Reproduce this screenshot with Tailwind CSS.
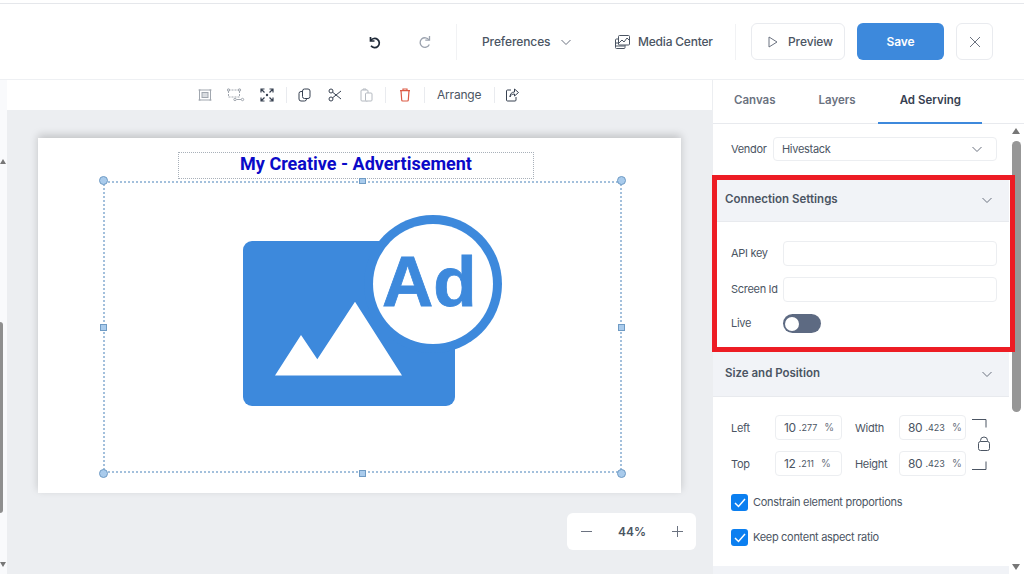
<!DOCTYPE html>
<html lang="en">
<head>
<meta charset="UTF-8">
<title>Ad Serving Editor</title>
<script src="https://cdn.jsdelivr.net/npm/@tailwindcss/browser@4"></script>
</head>
<body class="bg-white">
<div class="w-[1024px] h-[574px] overflow-hidden relative flex flex-col font-['Inter','Liberation_Sans',sans-serif] text-[#4b5563]">

  <!-- Header -->
  <header class="h-[77px] shrink-0 border-t border-t-[#e5e7eb] mt-[3px] border-b border-b-[#eef0f3] flex items-center text-[12px] font-medium tracking-[-0.1px]">
    <svg class="ml-[366px]" width="16" height="16" viewBox="0 0 16 16" fill="none" stroke="#1f2937" stroke-width="1.7"><path d="M4.500 3v4h4"/><path d="M4.800 6.600A4.600 4.600 0 1 1 5 11.800"/></svg>
    <svg class="ml-[35px]" width="16" height="16" viewBox="0 0 16 16" fill="none" stroke="#9ca3af" stroke-width="1.300"><path d="M12.500 2v4.200H8.300"/><path d="M12 6A4.800 4.800 0 1 0 12.300 10.500"/></svg>
    <div class="ml-[23px] w-px h-[36px] bg-[#f1f2f4]"></div>
    <span class="ml-[25px] w-[68px]">Preferences</span>
    <svg class="ml-[10px]" width="12" height="12" viewBox="0 0 12 12" fill="none" stroke="#6b7280"><path d="M1.500 4l4.500 4.500L10.500 4"/></svg>
    <svg class="ml-[42px]" width="17" height="16" viewBox="0 0 17 16" fill="none" stroke="#4b5563"><rect x="4.500" y="1.500" width="11" height="9.500" rx="1"/><path d="M5 9l3-3 2 2 3-4 2 2"/><path d="M4.500 5H2.500a1 1 0 0 0-1 1v7.500a1 1 0 0 0 1 1H10a1 1 0 0 0 1-1V11"/><path d="M1.500 9h3M1.500 12h9"/></svg>
    <span class="ml-[7px] w-[75px] whitespace-nowrap tracking-[-0.2px]">Media Center</span>
    <div class="ml-[22px] w-px h-[36px] bg-[#f1f2f4]"></div>
    <button class="ml-[15px] w-[94px] h-[37px] rounded-md border border-[#e9ebef] bg-white flex items-center pl-[15px] font-medium">
      <svg width="12" height="14" viewBox="0 0 12 14" fill="none" stroke="#6b7280"><path d="M2 2v10l8-5z"/></svg>
      <span class="ml-[9px]">Preview</span>
    </button>
    <button class="ml-[12px] w-[87px] h-[37px] rounded-md bg-[#3d89dc] text-white font-semibold">Save</button>
    <button class="ml-[12px] w-[37px] h-[37px] rounded-md border border-[#e9ebef] bg-white flex items-center justify-center">
      <svg width="12" height="12" viewBox="0 0 12 12" fill="none" stroke="#6b7280"><path d="M1 1l10 10M11 1L1 11"/></svg>
    </button>
  </header>

  <div class="flex flex-1 min-h-0">
    <!-- Left scrollbar strip -->
    <div class="w-[7px] shrink-0 bg-[#f9fafc] relative">
      <div class="absolute left-0 top-[79px] border-l-[3px] border-r-[3px] border-b-[5px] border-l-transparent border-r-transparent border-b-[#777]"></div>
      <div class="absolute left-0 top-[242px] w-[3px] h-[191px] rounded-r-sm bg-[#8f8f8f]"></div>
      <div class="absolute left-0 top-[482px] border-l-[3px] border-r-[3px] border-t-[5px] border-l-transparent border-r-transparent border-t-[#777]"></div>
    </div>

    <!-- Editor -->
    <main class="w-[705px] shrink-0 flex flex-col bg-[#eceef1]">
      <div class="h-[30px] shrink-0 bg-white flex items-center text-[12px] tracking-[-0.1px]">
        <svg class="ml-[191px]" width="14" height="14" viewBox="0 0 14 14" fill="none" stroke="#a1a7af"><rect x="1.500" y="2" width="11" height="10"/><rect x="4" y="4.500" width="6" height="5" fill="#d9dce0"/><path d="M0.500 2h2M11.500 2h2M0.500 12h2M11.500 12h2"/></svg>
        <svg class="ml-[15px]" width="18" height="14" viewBox="0 0 18 14" fill="none" stroke="#a1a7af"><rect x="1.500" y="2" width="11" height="7" stroke-dasharray="2 1"/><circle cx="1.500" cy="2" r="1.200"/><circle cx="12.500" cy="2" r="1.200"/><circle cx="8" cy="11.500" r="1.200"/><circle cx="15.500" cy="11.500" r="1.200"/><path d="M9.500 11.500h4.500"/></svg>
        <svg class="ml-[15px]" width="14" height="14" viewBox="0 0 14 14" fill="none" stroke="#374151" stroke-width="1.200"><path d="M1 4.500V1h3.500M9.500 1H13v3.500M13 9.500V13H9.500M4.500 13H1V9.500M1.500 1.500l3 3M12.500 1.500l-3 3M12.500 12.500l-3-3M1.500 12.500l3-3"/><circle cx="7" cy="7" r="1.200" fill="#374151" stroke="none"/></svg>
        <div class="ml-[12px] w-px h-[16px] bg-[#e9ebef]"></div>
        <svg class="ml-[11px]" width="13" height="14" viewBox="0 0 13 14" fill="none" stroke="#374151"><rect x="4.500" y="1" width="7.500" height="9.500" rx="2"/><path d="M4.500 3.500H3a2 2 0 0 0-2 2V11a2 2 0 0 0 2 2h3.500a2 2 0 0 0 2-2v-.5"/></svg>
        <svg class="ml-[17px]" width="14" height="14" viewBox="0 0 14 14" fill="none" stroke="#374151"><circle cx="3" cy="3" r="2"/><circle cx="3" cy="11" r="2"/><path d="M4.600 4.200L13 11M4.600 9.800L13 3"/></svg>
        <svg class="ml-[18px]" width="13" height="14" viewBox="0 0 13 14" fill="none" stroke="#b5bac1"><rect x="1" y="2" width="7" height="11" rx="1"/><rect x="5.500" y="5" width="6.500" height="8" rx="1" fill="#fff"/><path d="M3 2V1h3v1"/></svg>
        <div class="ml-[12px] w-px h-[16px] bg-[#e9ebef]"></div>
        <svg class="ml-[13px]" width="12" height="14" viewBox="0 0 12 14" fill="none" stroke="#dc5a45" stroke-width="1.200"><path d="M1 2.600h10M4 2.400V1h4v1.400M2 2.600l.7 9.400a1 1 0 0 0 1 1h4.600a1 1 0 0 0 1-1l.7-9.400"/></svg>
        <div class="ml-[13px] w-px h-[16px] bg-[#e9ebef]"></div>
        <span class="ml-[12px] w-[45px] tracking-[-0.2px]">Arrange</span>
        <div class="ml-[12px] w-px h-[16px] bg-[#e9ebef]"></div>
        <svg class="ml-[10px]" width="15" height="14" viewBox="0 0 15 14" fill="none" stroke="#374151"><path d="M6 2H2.500a1 1 0 0 0-1 1v9a1 1 0 0 0 1 1H10a1 1 0 0 0 1-1V9"/><path d="M9.500 1l4 3.500-4 3.500V6C7 6 5.500 7 5 9c0-3 1.500-5 4.500-5z"/></svg>
      </div>

      <div class="relative flex-1">
        <!-- Artboard -->
        <div class="absolute left-[31px] top-[28px] w-[643px] h-[355px] bg-white shadow-[0_-3px_8px_rgba(0,0,0,0.18)]">
          <div class="absolute left-[140px] top-[14px] w-[356px] h-[27px] border border-dotted border-[#a8b0b9] flex items-center justify-center pb-[4px] font-['Roboto',sans-serif] font-bold text-[18px] text-[#0a0ac8]">My Creative - Advertisement</div>

          <svg class="absolute left-[205px] top-[77px]" width="265" height="193" viewBox="243 215 265 193">
            <rect x="243" y="241" width="212" height="165" rx="9" fill="#3d89dc"/>
            <circle cx="433" cy="284" r="69" fill="#3d89dc"/>
            <circle cx="433" cy="284" r="60" fill="#fff"/>
            <polygon points="275,375.500 301,335 317.300,359.300 355,301.700 402,375.500" fill="#fff"/>
            <text x="382" y="306" font-family="Liberation Sans" font-weight="700" font-size="71" fill="#3d89dc" stroke="#3d89dc" stroke-width="0.800">Ad</text>
          </svg>

          <div class="absolute left-[65px] top-[43px] w-[519px] h-[292px] border-2 border-dotted border-[#a3c0dc]"></div>
          <div class="absolute left-[61px] top-[38px] w-[9px] h-[9px] rounded-full bg-[#a9cbec] border border-[#6f9bc4]"></div>
          <div class="absolute left-[579px] top-[38px] w-[9px] h-[9px] rounded-full bg-[#a9cbec] border border-[#6f9bc4]"></div>
          <div class="absolute left-[61px] top-[331px] w-[9px] h-[9px] rounded-full bg-[#a9cbec] border border-[#6f9bc4]"></div>
          <div class="absolute left-[579px] top-[331px] w-[9px] h-[9px] rounded-full bg-[#a9cbec] border border-[#6f9bc4]"></div>
          <div class="absolute left-[321px] top-[40px] w-[7px] h-[6px] bg-[#a9cbec] border border-[#6f9bc4]"></div>
          <div class="absolute left-[321px] top-[332px] w-[7px] h-[7px] bg-[#a9cbec] border border-[#6f9bc4]"></div>
          <div class="absolute left-[62px] top-[186px] w-[7px] h-[7px] bg-[#a9cbec] border border-[#6f9bc4]"></div>
          <div class="absolute left-[580px] top-[186px] w-[7px] h-[7px] bg-[#a9cbec] border border-[#6f9bc4]"></div>
        </div>

        <!-- Zoom control -->
        <div class="absolute left-[560px] top-[403px] w-[129px] h-[37px] rounded-md bg-white flex items-center justify-between pl-[14px] pr-[13px] text-[12px] font-semibold">
          <svg width="11" height="11" viewBox="0 0 11 11" stroke="#6b7280"><path d="M0 5.500h11"/></svg>
          <span>44%</span>
          <svg width="11" height="11" viewBox="0 0 11 11" stroke="#6b7280"><path d="M0 5.500h11M5.500 0v11"/></svg>
        </div>
      </div>
    </main>

    <!-- Right panel -->
    <aside class="flex-1 border-l border-[#eceef1] flex flex-col min-w-0 relative text-[11px] tracking-[-0.3px]">
      <div class="h-[44px] shrink-0 border-b border-[#e8eaee] flex items-center pb-[1px] text-[11.500px] tracking-normal font-semibold text-[#6b7280] relative">
        <span class="ml-[21px]">Canvas</span>
        <span class="ml-[43px]">Layers</span>
        <span class="ml-[44px] text-[#374151]">Ad Serving</span>
        <div class="absolute left-[165px] bottom-[-1px] w-[104px] h-[2px] bg-[#3d89dc]"></div>
      </div>

      <div class="flex flex-1 min-h-0">
        <div class="w-[296px] shrink-0">
          <div class="flex items-center pt-[13px] pb-[19px] pl-[18px]">
            <span class="w-[42px]">Vendor</span>
            <div class="w-[224px] h-[24px] rounded border border-[#eceef1] flex items-center justify-between px-[8px] pr-[13px]">
              <span>Hivestack</span>
              <svg width="12" height="12" viewBox="0 0 12 12" fill="none" stroke="#6b7280"><path d="M1.500 4l4.500 4.500L10.500 4"/></svg>
            </div>
          </div>

          <div class="h-[42px] bg-[#f1f3f7] border-b border-[#e8eaee] flex items-center justify-between pb-[1px] pl-[12px] pr-[16px] text-[11.500px] tracking-normal font-semibold">
            <span>Connection Settings</span>
            <svg width="12" height="12" viewBox="0 0 12 12" fill="none" stroke="#6b7280"><path d="M1.500 4l4.500 4.500L10.500 4"/></svg>
          </div>
          <div class="pl-[18px] pt-[19px] pb-[19px] flex flex-col gap-[11px]">
            <div class="flex items-center"><span class="w-[52px]">API key</span><div class="w-[214px] h-[25px] rounded border border-[#eceef1]"></div></div>
            <div class="flex items-center"><span class="w-[52px] whitespace-nowrap">Screen Id</span><div class="w-[214px] h-[25px] rounded border border-[#eceef1]"></div></div>
            <div class="flex items-center mt-[1px]">
              <span class="w-[52px]">Live</span>
              <div class="w-[38px] h-[19px] rounded-full bg-[#5d6a82] flex items-center pl-[2px]"><div class="w-[14px] h-[14px] rounded-full bg-white"></div></div>
            </div>
          </div>

          <div class="h-[45px] bg-[#f1f3f7] border-b border-[#e8eaee] flex items-center justify-between pl-[12px] pr-[16px] text-[11.500px] tracking-normal font-semibold">
            <span>Size and Position</span>
            <svg width="12" height="12" viewBox="0 0 12 12" fill="none" stroke="#6b7280"><path d="M1.500 4l4.500 4.500L10.500 4"/></svg>
          </div>
          <div class="pl-[18px] pt-[18px] relative">
            <div class="flex items-center">
              <span class="w-[44px] mt-[1px]">Left</span>
              <div class="w-[67px] h-[25px] rounded border border-[#eceef1] flex items-center pl-[8px]"><span class="text-[12px]">10</span><span class="ml-[3px] text-[9px] tracking-normal">.277</span><span class="ml-[7px] text-[#6b7280] text-[10px]">%</span></div>
              <span class="ml-[13px] w-[44px] mt-[1px]">Width</span>
              <div class="w-[67px] h-[25px] rounded border border-[#eceef1] flex items-center pl-[8px]"><span class="text-[12px]">80</span><span class="ml-[3px] text-[9px] tracking-normal">.423</span><span class="ml-[7px] text-[#6b7280] text-[10px]">%</span></div>
            </div>
            <div class="flex items-center mt-[11px]">
              <span class="w-[44px] mt-[1px]">Top</span>
              <div class="w-[67px] h-[25px] rounded border border-[#eceef1] flex items-center pl-[8px]"><span class="text-[12px]">12</span><span class="ml-[3px] text-[9px] tracking-normal">.211</span><span class="ml-[7px] text-[#6b7280] text-[10px]">%</span></div>
              <span class="ml-[13px] w-[44px] mt-[1px]">Height</span>
              <div class="w-[67px] h-[25px] rounded border border-[#eceef1] flex items-center pl-[8px]"><span class="text-[12px]">80</span><span class="ml-[3px] text-[9px] tracking-normal">.423</span><span class="ml-[7px] text-[#6b7280] text-[10px]">%</span></div>
            </div>
            <svg class="absolute left-[258px] top-[22px]" width="20" height="52" viewBox="0 0 20 52" fill="none" stroke="#4b5563"><path d="M1 0.500h14v8"/><rect x="7.500" y="22.500" width="11" height="9" rx="2"/><path d="M9.500 22.500v-1a3.500 3.500 0 0 1 7 0v1"/><path d="M1 50.500h14v-8"/></svg>

            <label class="flex items-center mt-[18px]">
              <span class="w-[17px] h-[17px] rounded-[3px] bg-[#0b7ff0] flex items-center justify-center"><svg width="12" height="10" viewBox="0 0 12 10" fill="none" stroke="#fff" stroke-width="1.500"><path d="M1 5l3.500 3.500L11 1"/></svg></span>
              <span class="ml-[5px]">Constrain element proportions</span>
            </label>
            <label class="flex items-center mt-[18px]">
              <span class="w-[17px] h-[17px] rounded-[3px] bg-[#0b7ff0] flex items-center justify-center"><svg width="12" height="10" viewBox="0 0 12 10" fill="none" stroke="#fff" stroke-width="1.500"><path d="M1 5l3.500 3.500L11 1"/></svg></span>
              <span class="ml-[5px]">Keep content aspect ratio</span>
            </label>
          </div>
          <div class="h-[20px] mt-[20px] bg-[#f1f3f7]"></div>
        </div>

        <!-- Panel scrollbar -->
        <div class="flex-1 relative">
          <div class="absolute left-[3px] top-[4px] border-l-[4px] border-r-[4px] border-b-[6px] border-l-transparent border-r-transparent border-b-[#777]"></div>
          <div class="absolute left-[3px] top-[17px] w-[9px] h-[271px] rounded-full bg-[#979797]"></div>
          <div class="absolute left-[3px] top-[440px] border-l-[4px] border-r-[4px] border-t-[6px] border-l-transparent border-r-transparent border-t-[#777]"></div>
        </div>
      </div>

      <!-- Red highlight over the connection section -->
      <div class="absolute left-[-1px] top-[95px] w-[303px] h-[177px] border-[5px] border-[#ed1c24] pointer-events-none"></div>
    </aside>
  </div>
</div>
</body>
</html>
